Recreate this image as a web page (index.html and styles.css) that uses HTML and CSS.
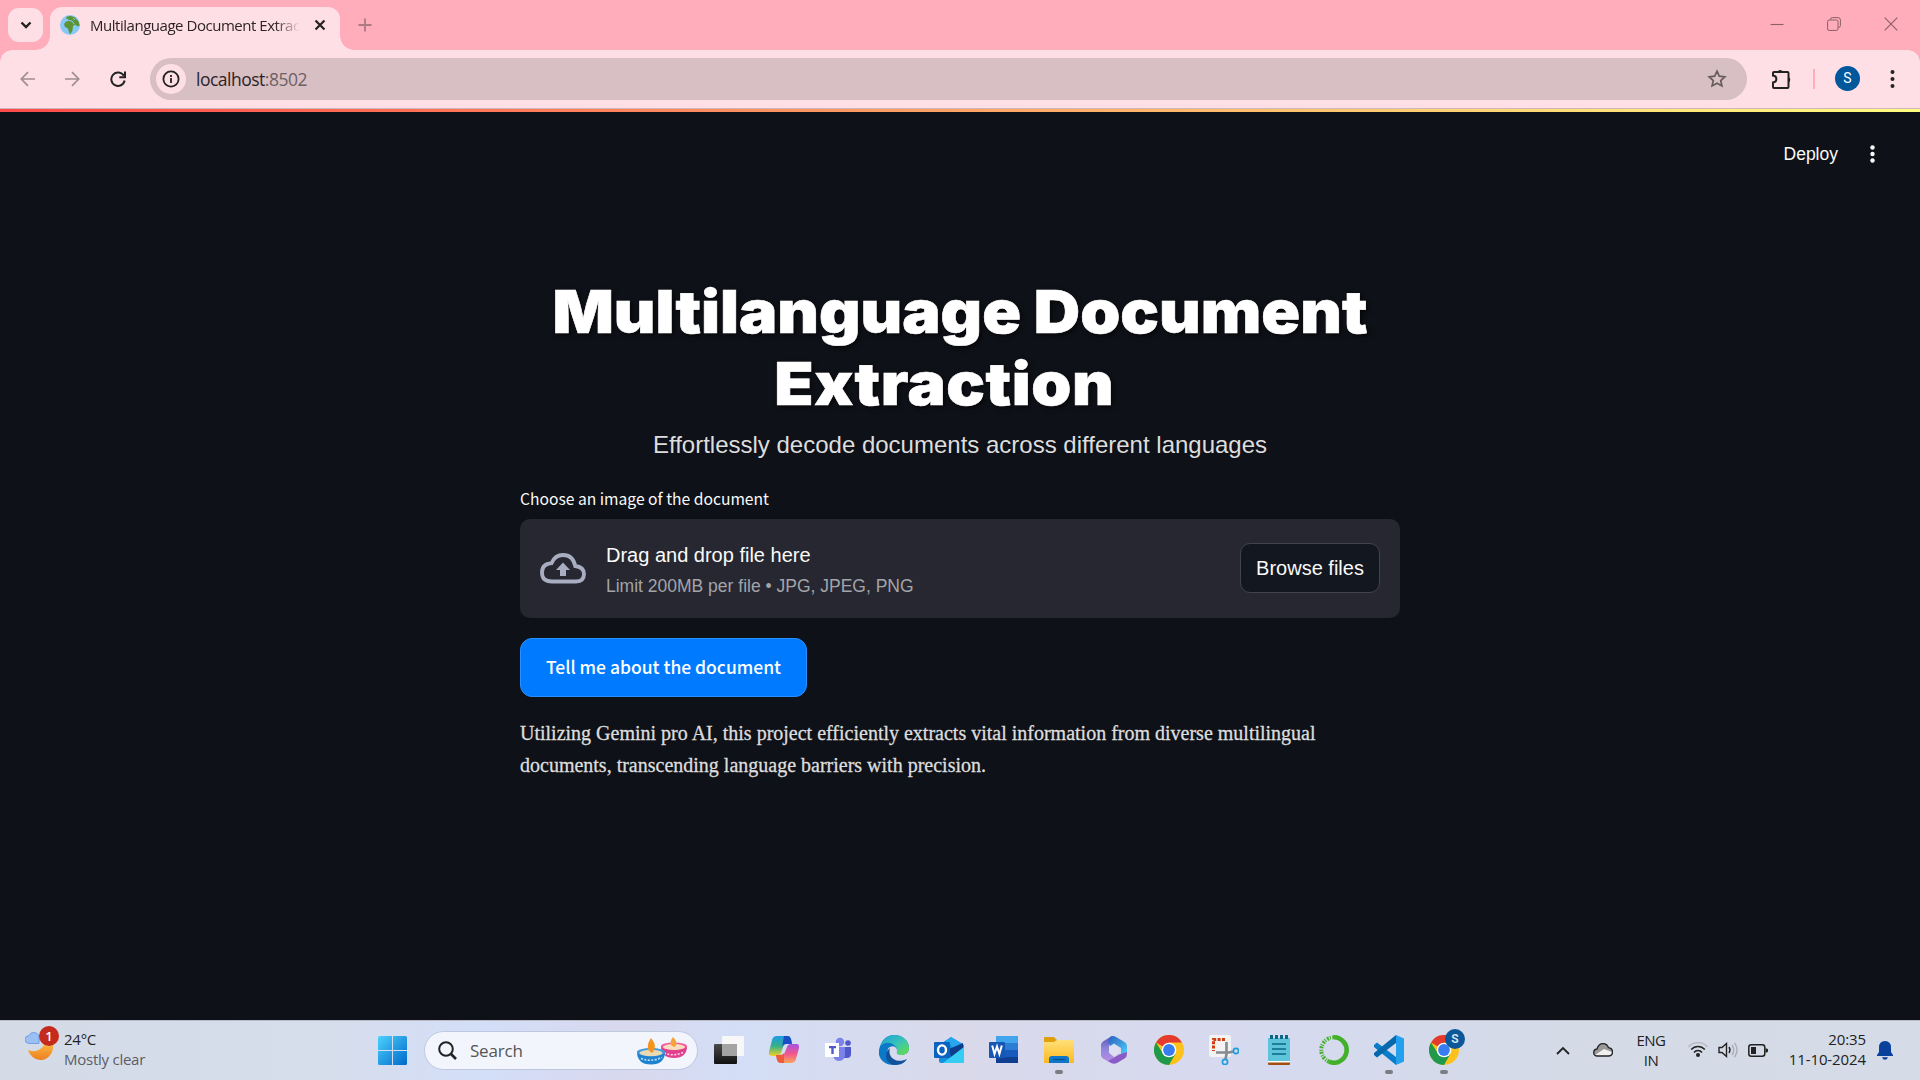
FILE: index.html
```html
<!DOCTYPE html>
<html lang="en">
<head>
<meta charset="utf-8">
<title>Multilanguage Document Extraction</title>
<link rel="stylesheet" href="styles.css">
</head>
<body>
<div class="tabstrip">
  <div class="tab-search"><svg width="12" height="8" viewBox="0 0 12 8"><path d="M1.5 1.5 6 6l4.500-4.500" fill="none" stroke="#222" stroke-width="2.400"/></svg></div>
  <div class="tab">
    <svg class="globe" width="20" height="20" viewBox="0 0 20 20"><circle cx="10" cy="10" r="10" fill="#86c9f7"/><path d="M7 1.500 11 1l4 1.500 3.500 4 1.200 4-2 1-2.700-2-2 1.500-.5 4.500-2 3.500-1.500-1.500-1-4L5 12 4 9l2-2.500L9 6 8 4 6 3.500z" fill="#5c9335"/><path d="M9 5.500l3 .5 2 3M13 3l2 2" stroke="#86c9f7" stroke-width="1" fill="none"/></svg>
    <span class="tab-title">Multilanguage Document Extrac</span>
    <svg width="12" height="12" viewBox="0 0 12 12"><path d="M1.500 1.500l9 9M10.500 1.500l-9 9" stroke="#222" stroke-width="2.200"/></svg>
  </div>
  <svg class="newtab" width="14" height="14" viewBox="0 0 14 14"><path d="M7 .500v13M.5 7h13" stroke="#ab7a83" stroke-width="1.800"/></svg>
  <div class="wincontrols">
    <svg width="14" height="14" viewBox="0 0 14 14"><path d="M.5 7.500h13" stroke="#8a5f67" stroke-width="1.100"/></svg>
    <svg width="14" height="14" viewBox="0 0 14 14"><rect x=".6" y="3" width="10.400" height="10.400" rx="1.500" fill="none" stroke="#8a5f67"/><path d="M3.500 2.500Q3.500.600 5.500.600H11q2.400 0 2.400 2.400v5.500q0 1.800-2 2" fill="none" stroke="#8a5f67"/></svg>
    <svg width="14" height="14" viewBox="0 0 14 14"><path d="M.7.700l12.600 12.600M13.300.700.7 13.300" stroke="#8a5f67" stroke-width="1.100"/></svg>
  </div>
</div>
<div class="toolbar">
  <svg class="nav" width="15" height="16" viewBox="0 0 15 16"><path d="M15 8H1.500M8 1.200 1.300 8 8 14.800" fill="none" stroke="#a08e92" stroke-width="1.700"/></svg>
  <svg class="nav" width="15" height="16" viewBox="0 0 15 16"><path d="M0 8h13.500M7 1.200 13.700 8 7 14.800" fill="none" stroke="#a08e92" stroke-width="1.700"/></svg>
  <svg class="nav" width="16" height="16" viewBox="0 0 16 16"><path d="M13.800 4.800A6.700 6.700 0 1 0 14.600 9.500" fill="none" stroke="#222" stroke-width="2"/><path d="M9.300 6.200h5.700V.500" fill="none" stroke="#222" stroke-width="2"/></svg>
  <div class="omnibox">
    <span class="info"><svg width="18" height="18" viewBox="0 0 18 18"><circle cx="9" cy="9" r="7.600" fill="none" stroke="#222" stroke-width="1.800"/><path d="M9 8v5M9 5v1.900" stroke="#222" stroke-width="1.800"/></svg></span>
    <span class="url">localhost<span class="port">:8502</span></span>
    <svg class="star" width="20" height="19" viewBox="0 0 20 19"><path d="M10 2.200l2.300 5 5.500.600-4.100 3.700 1.200 5.400L10 14.200l-4.900 2.700 1.200-5.400L2.200 7.800l5.500-.6z" fill="none" stroke="#665c5e" stroke-width="1.700"/></svg>
  </div>
  <svg class="ext" width="22" height="22" viewBox="0 0 22 22"><path d="M3 4h13.500q1 0 1 1v14q0 1-1 1H3q-1 0-1-1v-4.500c4.500-.5 4.500-6.500 0-7V5q0-1 1-1z" fill="none" stroke="#222" stroke-width="2"/><path d="M6.500 4a3 3.500 0 0 1 5.500 0zM17.500 9a3 3 0 0 1 0 5.500z" fill="#222"/></svg>
  <i class="sep"></i>
  <span class="avatar">S</span>
  <svg class="menu" width="5" height="20" viewBox="0 0 5 20"><g fill="#222"><circle cx="2.500" cy="3" r="2"/><circle cx="2.500" cy="10" r="2"/><circle cx="2.500" cy="17" r="2"/></g></svg>
</div>
<div class="decoration"></div>
<div class="app">
  <div class="appbar"><span>Deploy</span><svg width="5" height="18" viewBox="0 0 5 18"><g fill="#fafafa"><circle cx="2.500" cy="2.500" r="2.200"/><circle cx="2.500" cy="9" r="2.200"/><circle cx="2.500" cy="15.500" r="2.200"/></g></svg></div>
  <div class="content">
    <h1><span class="line">Multilanguage Document</span><span class="line second">Extraction</span></h1>
    <p class="subtitle">Effortlessly decode documents across different languages</p>
    <label class="label">Choose an image of the document</label>
    <div class="uploader">
      <svg width="46" height="31" viewBox="0 0 46 31"><path d="M12 28.500Q2 28.500 2 19.500 2 11 11.500 10.200 15 2 23 2q10 0 12.200 11Q44 14 44 21q0 7.500-8 7.500z" fill="none" stroke="#a9adc2" stroke-width="3.800"/><path d="M23 9.500l7 7.500h-4v6h-6v-6h-4z" fill="#a9adc2"/></svg>
      <div class="drop"><div class="drop-title">Drag and drop file here</div><div class="drop-sub">Limit 200MB per file • JPG, JPEG, PNG</div></div>
      <button class="browse">Browse files</button>
    </div>
    <button class="tell">Tell me about the document</button>
    <p class="about">Utilizing Gemini pro AI, this project efficiently extracts vital information from diverse multilingual<br>documents, transcending language barriers with precision.</p>
  </div>
</div>
<div class="taskbar">
  <div class="weather">
    <svg width="34" height="36" viewBox="0 0 34 36"><defs><linearGradient id="mo" x1="0" y1="0" x2="0" y2="1"><stop offset="0" stop-color="#f9c04a"/><stop offset="1" stop-color="#ef7f1e"/></linearGradient></defs><path d="M3 24c6 3 16 0 17-9l8 4c1 8-5 15-12 15-6 0-11-4-13-10z" fill="url(#mo)"/><path d="M4 17.500q-4-.500-4-4 0-3.500 4-4Q5.500 6 9.500 6.500 13 7 14 10v7.500z" fill="#9cc0f4" stroke="#6f9fe8"/><circle cx="24" cy="10" r="10" fill="#c42b1c"/></svg>
    <b>1</b>
    <div class="wtext">24°C<small>Mostly clear</small></div>
  </div>
  <svg class="start" width="29" height="29" viewBox="0 0 29 29"><defs><linearGradient id="wi" x1="0" y1="0" x2="1" y2="1"><stop offset="0" stop-color="#4cd2fb"/><stop offset="1" stop-color="#0068cc"/></linearGradient></defs><path d="M1.500 0H14v14H0V1.500Q0 0 1.500 0zM15 0h12.500Q29 0 29 1.500V14H15zM0 15h14v14H1.500Q0 29 0 27.500zM15 15h14v12.500q0 1.500-1.500 1.500H15z" fill="url(#wi)"/></svg>
  <div class="search">
    <svg width="19" height="19" viewBox="0 0 19 19"><circle cx="8" cy="8" r="6.800" fill="none" stroke="#222" stroke-width="2"/><path d="M13 13l5 5" stroke="#222" stroke-width="2.600"/></svg>
    <span>Search</span>
    <svg class="diya" width="50" height="28" viewBox="0 0 50 28"><path d="M24 9h26q0 12-13 12T24 9z" fill="#e0408e"/><ellipse cx="37" cy="9" rx="13" ry="3.500" fill="#f05fa4"/><ellipse cx="37" cy="10" rx="11" ry="3" fill="#f8dfc0"/><path d="M36 0c4 4 5 8 1 10-5-2-4-6-1-10z" fill="#f6a33c"/><path d="M27 16q10 4 20-1" stroke="#ffd3e8" stroke-width="1.500" stroke-dasharray="2 1.500" fill="none"/><path d="M0 14.500h28q0 13-14 13t-14-13z" fill="#2083cf"/><ellipse cx="14" cy="15" rx="14" ry="4" fill="#3f9be0"/><ellipse cx="14" cy="16" rx="11.500" ry="3.200" fill="#e9d9b4"/><path d="M14 1c5 6 5 11 1 15-6-3-5-9-1-15z" fill="#f7941d"/><path d="M4 21.500q10 4 21-1" stroke="#bfe2ff" stroke-width="1.600" stroke-dasharray="2 1.500" fill="none"/></svg>
  </div>
  <div class="apps">
    <span><svg viewBox="0 0 30 30"><defs><linearGradient id="tv" x1="0" y1="0" x2="0" y2="1"><stop offset="0" stop-color="#4a4a4a"/><stop offset="1" stop-color="#111"/></linearGradient></defs><rect x="0" y="9" width="23" height="20" rx="1" fill="url(#tv)"/><rect x="8" y="1" width="22" height="20" rx="1" fill="#f7f7f7"/><path d="M8 9h15v12H8z" fill="#a3a3a3"/></svg></span>
    <span><svg viewBox="0 0 30 30"><defs><linearGradient id="ca" x1="0" y1="0" x2="0" y2="1"><stop offset="0" stop-color="#1f9ae8"/><stop offset=".5" stop-color="#33b08a"/><stop offset="1" stop-color="#f2d021"/></linearGradient><linearGradient id="cb" x1="0" y1="0" x2="0" y2="1"><stop offset="0" stop-color="#a453e6"/><stop offset=".5" stop-color="#f0568d"/><stop offset="1" stop-color="#fba35b"/></linearGradient></defs><path d="M8 1h11q2 0 3 3l1 5h-6q-2 0-3 3l-2 6q-1 3-3 3H3q-4 0-3-4L3 5q1-4 5-4z" fill="url(#ca)"/><path d="M15 1h4q2 0 3 3l1 5h-6q-3 0-4 3z" fill="#1a4fc4"/><path d="M22 28H11q-2 0-3-3l-1-5h5q3 0 4-3l2-5q1-3 4-3h5q4 0 3 4l-3 11q-1 4-5 4z" fill="url(#cb)"/><path d="M15 28h-4q-2 0-3-3l-1-5h5q2 0 3-2z" fill="#ee5a3c"/></svg></span>
    <span><svg viewBox="0 0 30 30"><circle cx="16" cy="7" r="4.200" fill="#7b83eb"/><circle cx="24" cy="8" r="2.800" fill="#5059c9"/><path d="M20 12h7v7q0 4-4 4h-3z" fill="#5059c9"/><path d="M9 12h12v7q0 7-6 7t-6-7z" fill="#7b83eb"/><path d="M1 8h14v14H1z" fill="#fff"/><path d="M5 11h7v2.200H9.700V19H7.300v-5.800H5z" fill="#5059c9"/></svg></span>
    <span><svg viewBox="0 0 30 30"><defs><linearGradient id="ea" x1="0" y1="0" x2="1" y2="1"><stop offset="0" stop-color="#1f9fd9"/><stop offset=".5" stop-color="#36c3b8"/><stop offset="1" stop-color="#6ae03e"/></linearGradient></defs><path d="M0 15C2 5 8 0 15 0c9 0 15 6 15 13 0 5-4 7-8 7-3 0-5-2-4-3 1-5-4-7-7-5C6 13 9 25 20 29 8 33-2 24 0 15z" fill="#0b78c8"/><path d="M1 12C4 4 9 0 15 0c9 0 15 6 15 13 0 5-4 7-8 7-3 0-5-2-4-3 2-7-11-14-17-5z" fill="url(#ea)"/><path d="M11 13c-3 10 7 16 17 11-4 6-10 7-16 5C5 25 6 17 11 13z" fill="#11529c"/></svg></span>
    <span><svg viewBox="0 0 30 30"><path d="M5 10 17 2l13 8v16q0 2-2 2H7q-2 0-2-2z" fill="#1490df"/><path d="M12 6l5-4 12 7-6 7z" fill="#27a6ee"/><path d="M15 14 29 8v5L17 23z" fill="#0e3d8c"/><path d="M30 12v14q0 2-2 2H9z" fill="#36cdf5"/><rect y="7" width="16" height="16" rx="1" fill="#0a63c0"/><ellipse cx="8" cy="15" rx="4" ry="4.600" fill="none" stroke="#fff" stroke-width="2.400"/></svg></span>
    <span><svg viewBox="0 0 30 30"><path d="M7 1h22v7H7z" fill="#41a5ee"/><path d="M7 8h22v7H7z" fill="#2b7cd3"/><path d="M7 15h22v7H7z" fill="#185abd"/><path d="M7 22h22v6H7z" fill="#103f91"/><rect y="7" width="16" height="16" rx="1" fill="#1757b4"/><path d="M3.200 10.500 5.500 19l2.500-7.500 2.400 7.500 2.400-8.500" fill="none" stroke="#fff" stroke-width="2"/></svg></span>
    <span class="run"><svg viewBox="0 0 30 30"><defs><linearGradient id="fo" x1="0" y1="0" x2="0" y2="1"><stop offset="0" stop-color="#ffe07a"/><stop offset="1" stop-color="#fcb91e"/></linearGradient></defs><path d="M0 10V3q0-1 1-1h9l3 3h12v5z" fill="#dfa010"/><path d="M0 7h10l3-2h17v23H0z" fill="url(#fo)"/><path d="M5 28v-4q0-3 3-3h14q3 0 3 3v4z" fill="#0f77c9"/><path d="M9 24.500h12" stroke="#074f8c" stroke-width="1.200"/></svg></span>
    <span><svg viewBox="0 0 30 30"><defs><linearGradient id="ma" x1="0" y1="0" x2="0" y2="1"><stop offset="0" stop-color="#5b53b5"/><stop offset=".5" stop-color="#8f86dc"/><stop offset="1" stop-color="#b98be6"/></linearGradient><linearGradient id="mb" x1="0" y1="0" x2="1" y2="1"><stop offset="0" stop-color="#2a5fc0"/><stop offset="1" stop-color="#4fd0fa"/></linearGradient></defs><path d="M13 1 4 6.500Q2 8 2 10v10q0 2 2 3.500l6 3.500 5-5-5-4v-7z" fill="url(#ma)"/><path d="M11 2q3-2 6 0l8.500 5Q28 8.500 28 11v8l-6 1v-7l-7-4.500-4 2.500-2-4z" fill="url(#mb)"/><path d="M28 17v2q0 3-2.500 4.500L18 28q-3 1.500-6 0l-3-2 11-6.500z" fill="#8c5cc6"/><path d="M15 9.500l5 3v5l-5 3-5-3v-5z" fill="#dedff0"/></svg></span>
    <span><svg viewBox="0 0 30 30"><g id="ch"><circle cx="15" cy="15" r="15" fill="#fcc21b"/><path d="M15 15 2 7.500A15 15 0 0 1 28 7.500H15z" fill="#e33b2e"/><path d="M2 7.500A15 15 0 0 0 15 30l6.500-11.300L9 18.500z" fill="#1f9a4c"/><circle cx="15" cy="15" r="7.300" fill="#fff"/><circle cx="15" cy="15" r="5.900" fill="#377cf0"/></g></svg></span>
    <span><svg viewBox="0 0 30 30"><rect width="22" height="22" rx="2" fill="#f3f3f3"/><path d="M16 4.500H4.500V16" fill="none" stroke="#d13d0c" stroke-width="3" stroke-dasharray="3 1.400"/><path d="M17.500 7v12l-1 5M7 17.500h13l4-1" stroke="#858b90" stroke-width="2.600" fill="none"/><circle cx="27" cy="16" r="2.600" fill="none" stroke="#209ddb" stroke-width="1.700"/><circle cx="16" cy="27" r="2.600" fill="none" stroke="#209ddb" stroke-width="1.700"/></svg></span>
    <span><svg viewBox="0 0 30 30"><path d="M4 26h22v3q0 1-1 1H5q-1 0-1-1z" fill="#a14f11"/><path d="M4 25.500h22v2H4z" fill="#fff"/><path d="M4 3h22v23H4z" fill="#5dc4da"/><path d="M8 9h14M8 14h14M8 19h14" stroke="#0b6785" stroke-width="1.700"/><path d="M7.500 0v4M12.500 0v4M17.500 0v4M22.500 0v4" stroke="#0b6785" stroke-width="3"/></svg></span>
    <span><svg viewBox="0 0 30 30"><path d="M15 2.300a12.700 12.700 0 1 1-5 24.400" fill="none" stroke="#43b02a" stroke-width="4.600"/><path d="M10 26.700A12.700 12.700 0 0 1 15 2.300" fill="none" stroke="#43b02a" stroke-width="4" stroke-dasharray="2 1 1 1.500"/></svg></span>
    <span class="run"><svg viewBox="0 0 30 30"><path d="M0 10l3-2.500L22 22v8L0 12z" fill="#0a7cc9"/><path d="M0 20l3 2.500L22 8V0L0 18z" fill="#0868ae"/><path d="M22 0l8 3.500v23L22 30z" fill="#24a1ee"/></svg></span>
    <span class="run"><svg viewBox="0 0 30 30"><use href="#ch"/></svg><em>S</em></span>
  </div>
  <div class="tray">
    <svg class="caret" width="14" height="9" viewBox="0 0 14 9"><path d="M1 8l6-6 6 6" fill="none" stroke="#222" stroke-width="1.800"/></svg>
    <svg class="cloud" width="20" height="14" viewBox="0 0 20 14"><path d="M4.500 13Q.700 13 .7 9.500.7 6.500 4 6 5.500.700 10 .700q4 0 5.500 4 4 .500 4 4.300T15.500 13z" fill="#999"/><path d="M2 12l9-6 8 3q0 4-4 4H5z" fill="#f0f0f0"/><path d="M4.500 13Q.700 13 .7 9.500.7 6.500 4 6 5.500.700 10 .700q4 0 5.500 4 4 .500 4 4.300T15.500 13z" fill="none" stroke="#222" stroke-width="1.300"/></svg>
    <div class="lang">ENG<br>IN</div>
    <svg class="wifi" width="20" height="16" viewBox="0 0 20 16"><circle cx="10" cy="13" r="2" fill="#222"/><g fill="none" stroke="#222" stroke-width="1.500"><path d="M6 10.500a5 5 0 0 1 8 0M3.200 7.500a9 9 0 0 1 13.600 0"/><path d="M.5 5a12.500 12.500 0 0 1 19 0" stroke="#b4b9c3"/></g></svg>
    <svg class="sound" width="20" height="16" viewBox="0 0 20 16"><path d="M1 5.500h3L8.500 1.500v13L4 10.500H1z" fill="none" stroke="#222" stroke-width="1.400"/><g fill="none" stroke="#222" stroke-width="1.400"><path d="M11 5q2 3 0 6"/><path d="M14 3q3.500 5 0 10M16.500.800q5 7 0 14.400" stroke="#a9aeb8"/></g></svg>
    <svg class="batt" width="20" height="13" viewBox="0 0 20 13"><rect x=".8" y=".8" width="16" height="11.400" rx="2.500" fill="none" stroke="#222" stroke-width="1.500"/><path d="M3 3h5v7H3zM17.500 4.500h1.500l1 1v2l-1 1h-1.500z" fill="#222"/></svg>
    <div class="clock">20:35<br>11-10-2024</div>
    <svg class="bell" width="16" height="19" viewBox="0 0 16 19"><path d="M8 0q6 0 6 6.500V11l2 3v1H0v-1l2-3V6.500Q2 0 8 0zM5 16.300h6q-1 2.500-3 2.500t-3-2.500z" fill="#0a429b"/></svg>
  </div>
</div>
</body>
</html>
```
FILE: styles.css
```css
* { box-sizing: border-box; }
body { margin: 0; width: 1920px; height: 1080px; overflow: hidden; background: #0e1117; display: flex; flex-direction: column; font-family: "Liberation Sans", Arial, sans-serif; }
svg { display: block; flex: none; }
p, h1 { margin: 0; font-weight: 400; }
button { font: inherit; color: inherit; padding: 0; white-space: nowrap; }

.tabstrip { height: 50px; background: #ffacbb; display: flex; align-items: flex-start; padding: 7px 0 0 8px; font-family: "Open Sans", sans-serif; }
.tab-search { width: 35px; height: 34px; margin-top: 1px; border-radius: 11px; background: #ffdfe6; display: flex; align-items: center; justify-content: center; }
.tab { position: relative; width: 290px; height: 43px; margin-left: 7px; background: #ffdfe6; border-radius: 12px 12px 0 0; display: flex; align-items: center; padding: 0 14px 7px 10px; }
.tab::before, .tab::after { content: ""; position: absolute; bottom: 0; width: 14px; height: 14px; }
.tab::before { left: -14px; background: radial-gradient(circle at 0 0, transparent 13.5px, #ffdfe6 14px); }
.tab::after { right: -14px; background: radial-gradient(circle at 100% 0, transparent 13.5px, #ffdfe6 14px); }
.tab-title { width: 212px; margin: 0 14px 0 10px; overflow: hidden; font-size: 15px; line-height: 22px; letter-spacing: -.47px; color: #2c2426; white-space: nowrap; -webkit-mask-image: linear-gradient(90deg, #000 88%, transparent 100%); }
.newtab { margin: 11px 0 0 18px; }
.wincontrols { margin: 10px 22px 0 auto; display: flex; gap: 43px; }

.toolbar { height: 59px; background: radial-gradient(circle at 12px 12px, #ffdfe6 11.5px, #ffacbb 12px) 0 0 / 12px 12px no-repeat, radial-gradient(circle at 0 12px, #ffdfe6 11.5px, #ffacbb 12px) 100% 0 / 12px 12px no-repeat, #ffdfe6; border-bottom: 1px solid #cdb6bc; display: flex; align-items: center; padding: 0 22px 1px 20px; }
.toolbar .nav { margin-right: 30px; }
.toolbar .nav:nth-child(3) { margin-right: 24px; }
.omnibox { width: 1597px; height: 42px; border-radius: 21px; background: #d8bfc3; display: flex; align-items: center; padding: 0 20px 0 6px; }
.info { width: 30px; height: 30px; border-radius: 50%; background: #ffdfe6; display: flex; align-items: center; justify-content: center; }
.url { margin-left: 10px; font: 17.5px/26px "Open Sans", sans-serif; letter-spacing: -.5px; color: #2c2426; }
.port { color: #6e6063; }
.star { margin-left: auto; }
.ext { margin-left: 24px; }
.sep { width: 2px; height: 20px; margin-left: 20px; background: #ffacbb; }
.avatar { width: 25px; height: 25px; margin-left: 20px; border-radius: 50%; background: #00579c; color: #fff; font: 14px/25px Roboto, sans-serif; text-align: center; }
.menu { margin-left: 30px; }
.decoration { height: 3px; background: linear-gradient(90deg, #ff4b4b, #fffd80); }

.app { height: 908px; background: #0e1117; color: #fafafa; }
.appbar { height: 82px; display: flex; justify-content: flex-end; align-items: center; padding: 2px 45px 0 0; gap: 32px; font-size: 17.5px; }
.content { width: 880px; margin: 0 auto; padding-top: 82px; }
h1 { font: 900 59px/72px Inter, sans-serif; color: #fff; text-align: center; white-space: nowrap; text-shadow: 2px 2px 5px rgba(0,0,0,.7); -webkit-text-stroke: .6px #fff; transform: scaleX(1.088); }
.line { display: block; }
.second { padding-right: 29px; letter-spacing: .5px; }
.subtitle { margin-top: 7px; font-size: 24px; line-height: 36px; text-align: center; color: #ddd; }
.label { display: block; margin: 23px 0 7px; font: 15.65px/26px "Noto Sans CJK SC", sans-serif; }
.uploader { height: 99px; border-radius: 10px; background: #262730; display: flex; align-items: center; padding: 0 20px; }
.drop { margin-left: 20px; padding-top: 1px; }
.drop-title { font-size: 20px; line-height: 32px; }
.drop-sub { padding-top: 1px; font-size: 17.5px; line-height: 28px; color: #a3a4a9; }
.browse { width: 140px; height: 50px; margin: 0 0 1px auto; border: 1px solid #41444c; border-radius: 10px; background: #131720; font-size: 20px; }
.tell { display: block; width: 287px; height: 59px; margin-top: 20px; padding-bottom: 2px; border: 1px solid #2b90ff; border-radius: 12px; background: #007bff; color: #fff; font: 500 17.5px/28px "Noto Sans CJK SC", sans-serif; }
.about { margin-top: 20px; font: 20px/32px "Liberation Serif", serif; color: #ddd; -webkit-text-stroke: .3px #ddd; }

.taskbar { height: 60px; border-top: 1px solid #b9bcc6; background: linear-gradient(90deg, #d4dbe7 0, #d6ddeb 17%, #d3def8 25%, #d8d8ee 33%, #d3def6 38%, #d9d9ea 50%, #d6daf0 66%, #d4dae6 82%, #d5dbe7); display: flex; align-items: flex-start; font: 15px/20px "Open Sans", sans-serif; color: #222; }
.weather { position: relative; width: 353px; margin-left: 25px; display: flex; padding-top: 5px; }
.weather b { position: absolute; left: 14px; top: 5px; width: 20px; font-weight: 600; font-size: 13px; color: #fff; text-align: center; }
.wtext { margin: 3px 0 0 5px; letter-spacing: -.25px; }
.wtext small { display: block; font-size: 15px; color: #5a5d66; }
.start { margin-top: 15px; }
.search { width: 274px; height: 39px; margin: 10px 16px 0 17px; border: 1px solid #bec8df; border-radius: 20px; background: #f3f5fd; display: flex; align-items: center; padding: 0 10px 0 13px; font-size: 17px; letter-spacing: -.2px; color: #555; gap: 13px; }
.diya { margin-left: auto; }
.apps { display: flex; gap: 25px; margin-top: 14px; }
.apps span { position: relative; width: 30px; height: 30px; }
.run::after { content: ""; position: absolute; left: 11px; top: 35px; width: 8px; height: 4px; border-radius: 2px; background: #7b7d84; }
.run em { position: absolute; left: 16px; top: -6px; width: 20px; height: 20px; border-radius: 50%; background: #0b5797; color: #cfe0f0; font: 700 12px/20px Roboto, sans-serif; text-align: center; }
.tray { display: flex; height: 58px; align-items: center; margin-left: 97px; }
.cloud { margin-left: 23px; }
.lang { width: 36px; margin-left: 20px; text-align: center; letter-spacing: -.5px; }
.wifi { margin-left: 19px; }
.sound { margin-left: 10px; }
.batt { margin-left: 10px; }
.clock { width: 98px; padding-bottom: 2px; text-align: right; letter-spacing: -.1px; }
.bell { margin-left: 11px; }
```
